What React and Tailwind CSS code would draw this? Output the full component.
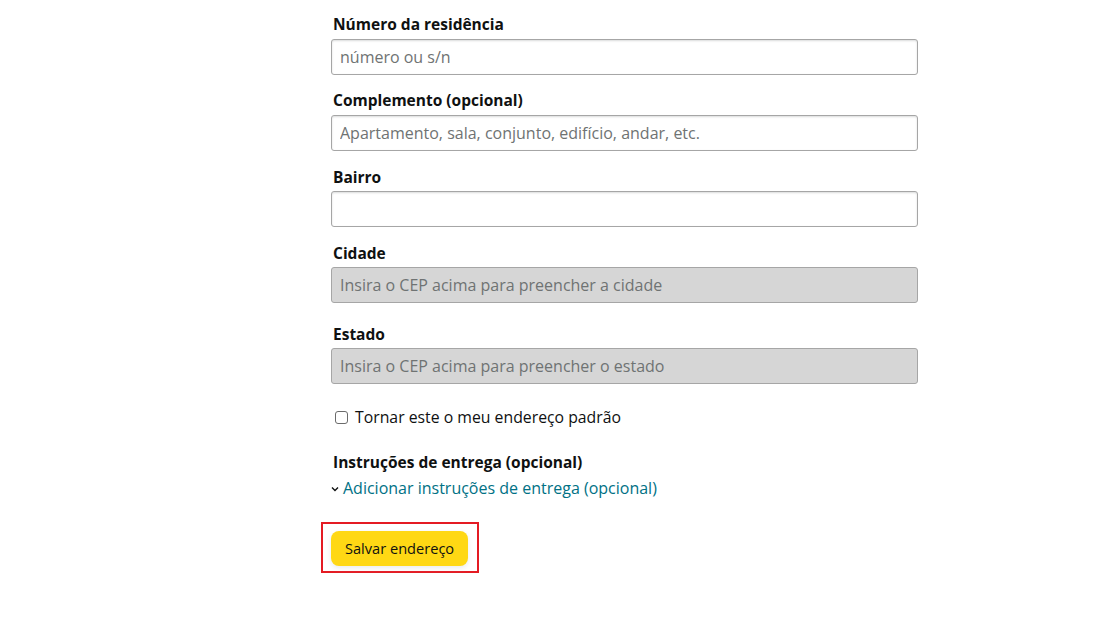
export default function App() {
  const label = 'block text-[15.5px] leading-[22px] font-bold text-[#0f1111] pl-[2px]'
  const input = 'block w-full h-[36px] rounded-[3px] border border-[#a6a6a6] px-[8px] text-[16px] text-[#0f1111] placeholder:text-[#6f7373] shadow-[inset_0_1px_2px_rgba(15,17,17,0.15)] outline-none'
  const disabled = 'block w-full h-[36px] rounded-[3px] border border-[#a6a6a6] bg-[#d6d6d6] px-[8px] text-[16px] placeholder:text-[#6f7373] outline-none'

  return (
    <div className="min-h-[620px] bg-white" style={{ fontFamily: '"Open Sans", "Noto Sans", sans-serif' }}>
      <div className="ml-[331px] w-[587px] pt-[13px]">
        <div>
          <label className={label}>Número da residência</label>
          <input className={`${input} mt-[4px]`} placeholder="número ou s/n" />
        </div>
        <div className="mt-[14px]">
          <label className={label}>Complemento (opcional)</label>
          <input className={`${input} mt-[4px]`} placeholder="Apartamento, sala, conjunto, edifício, andar, etc." />
        </div>
        <div className="mt-[15px]">
          <label className={label}>Bairro</label>
          <input className={`${input} mt-[3px]`} />
        </div>
        <div className="mt-[15px]">
          <label className={label}>Cidade</label>
          <input disabled className={`${disabled} mt-[3px]`} placeholder="Insira o CEP acima para preencher a cidade" />
        </div>
        <div className="mt-[20px]">
          <label className={label}>Estado</label>
          <input disabled className={`${disabled} mt-[3px]`} placeholder="Insira o CEP acima para preencher o estado" />
        </div>

        <label className="mt-[22px] flex items-center gap-[7px] pl-[4px] text-[15.8px] leading-[22px] text-[#0f1111]">
          <span className="block h-[13px] w-[13px] rounded-[3px] border border-[#6b6b6b] bg-white" />
          Tornar este o meu endereço padrão
        </label>

        <div className="mt-[23px]">
          <div className={label}>Instruções de entrega (opcional)</div>
          <div className="mt-[4px] flex items-center gap-[4px] text-[16px] leading-[22px] text-[#007185]">
            <svg width="8" height="6" viewBox="0 0 8 6" className="mt-[1px]">
              <path d="M1 1.5 L4 4.5 L7 1.5" fill="none" stroke="#0f1111" strokeWidth="1.4" />
            </svg>
            Adicionar instruções de entrega (opcional)
          </div>
        </div>

        <div className="-ml-[10px] mt-[23px] inline-block border-2 border-[#e41b23] pl-[8px] pr-[9px] pt-[7px] pb-[5px]">
          <button className="h-[35px] rounded-[8px] bg-[#ffd814] px-[14px] text-[14.6px] text-[#0f1111] shadow-[0_2px_5px_rgba(213,217,217,0.5)]">
            Salvar endereço
          </button>
        </div>
      </div>
    </div>
  )
}
